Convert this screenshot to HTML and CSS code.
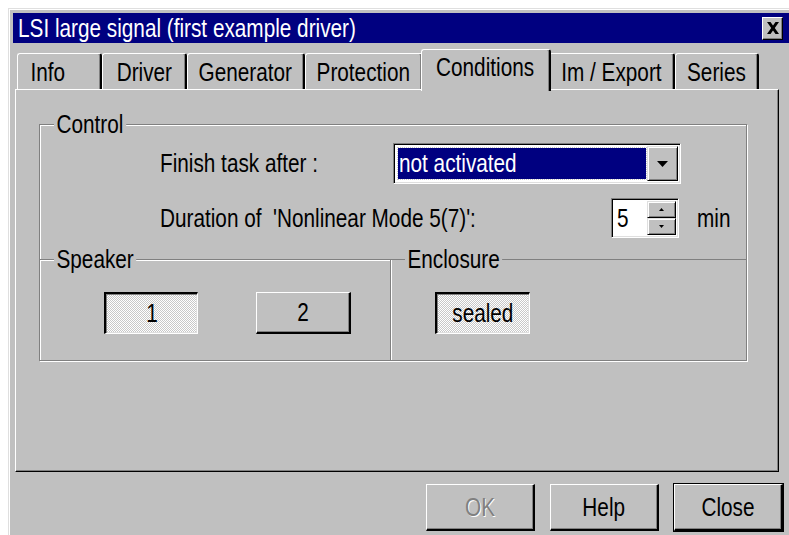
FILE: index.html
```html
<!DOCTYPE html>
<html lang="en">
<head>
<meta charset="utf-8">
<title>LSI large signal</title>
<link rel="stylesheet" href="styles.css">
</head>
<body>
<div class="window">
  <div class="titlebar">
    <span class="title"><span class="nt">LSI large signal (first example driver)</span></span>
    <span class="close-btn">
      <svg width="14" height="12" viewBox="0 0 14 12"><path d="M1 0h3.5l2.5 3.6L9.5 0H13L8.8 6 13 12H9.5L7 8.4 4.5 12H1l4.2-6z" fill="#000"/></svg>
    </span>
  </div>

  <div class="tabs">
    <div class="tab tab-info"><span class="nt">Info</span></div>
    <div class="tab tab-driver"><span class="nt">Driver</span></div>
    <div class="tab tab-generator"><span class="nt">Generator</span></div>
    <div class="tab tab-protection"><span class="nt">Protection</span></div>
    <div class="tab tab-conditions active"><span class="nt">Conditions</span></div>
    <div class="tab tab-export"><span class="nt">Im / Export</span></div>
    <div class="tab tab-series"><span class="nt">Series</span></div>
  </div>

  <div class="panel">
    <div class="group control">
      <span class="legend">Control</span>
      <div class="row row-finish">
        <span class="lbl lbl-finish"><span class="nt">Finish task after :</span></span>
        <div class="combo">
          <div class="combo-value"><span class="combo-sel"><span class="nt">not activated</span></span></div>
          <div class="combo-btn">
            <svg width="11" height="6" viewBox="0 0 11 6"><path d="M0 0h11L5.5 6z" fill="#000"/></svg>
          </div>
        </div>
      </div>
      <div class="row row-duration">
        <span class="lbl lbl-duration"><span class="nt">Duration of  'Nonlinear Mode 5(7)':</span></span>
        <div class="spin">
          <div class="spin-value"><span class="nt">5</span></div>
          <div class="spin-btns">
            <div class="spin-btn"><svg width="5" height="3" viewBox="0 0 5 3"><path d="M2.5 0L5 3H0z" fill="#000"/></svg></div>
            <div class="spin-btn"><svg width="5" height="3" viewBox="0 0 5 3"><path d="M0 0h5L2.5 3z" fill="#000"/></svg></div>
          </div>
        </div>
        <span class="unit"><span class="nt">min</span></span>
      </div>
    </div>
    <div class="groups">
      <div class="group speaker">
        <span class="legend">Speaker</span>
        <div class="btn pressed btn-one"><span class="nt">1</span></div>
        <div class="btn btn-two"><span class="nt">2</span></div>
      </div>
      <div class="group enclosure">
        <span class="legend">Enclosure</span>
        <div class="btn pressed btn-sealed"><span class="nt">sealed</span></div>
      </div>
    </div>
  </div>

  <div class="actions">
    <div class="btn action disabled"><span class="nt">OK</span></div>
    <div class="btn action"><span class="nt">Help</span></div>
    <div class="btn action default"><span class="nt">Close</span></div>
  </div>
</div>
</body>
</html>
```

FILE: styles.css
```css
html, body {
  margin: 0;
  padding: 0;
  background: #fff;
  overflow: hidden;
}

body {
  font-family: "Liberation Sans", Arial, sans-serif;
  font-size: 25px;
  color: #000;
}

/* Narrow dialog lettering: the sans face squeezed horizontally */
.nt {
  display: inline-block;
  white-space: pre;
  transform: scaleX(0.83);
  transform-origin: center;
}

.title .nt,
.lbl .nt,
.combo-sel .nt,
.spin-value .nt,
.unit .nt {
  transform-origin: left center;
}

/* Dialog frame */
.window {
  margin: 8px 0 0 8px;
  width: 776px;
  height: 540px;
  padding: 4px 0 0 4px;
  background: #c0c0c0;
  border-top: 1px solid #dfdfdf;
  border-left: 1px solid #dfdfdf;
  box-shadow: inset 1px 1px #fff;
}

.titlebar {
  height: 30px;
  background: #000080;
  color: #fff;
  display: flex;
  align-items: center;
  justify-content: space-between;
  padding: 0 6px 0 5px;
}

.title {
  flex: 1;
  line-height: 30px;
  white-space: nowrap;
}

.close-btn {
  width: 21px;
  height: 23px;
  box-sizing: border-box;
  background: #c0c0c0;
  border-top: 1px solid #fff;
  border-left: 1px solid #fff;
  border-right: 1px solid #000;
  border-bottom: 1px solid #000;
  box-shadow: inset -1px -1px #808080;
  display: flex;
  align-items: center;
  justify-content: center;
}

/* Tab strip */
.tabs {
  display: flex;
  align-items: flex-end;
  height: 40px;
  margin-top: 6px;
  padding-left: 4px;
}

.tab {
  position: relative;
  box-sizing: border-box;
  height: 36px;
  border-top: 1px solid #fff;
  border-left: 1px solid #fff;
  border-right: 2px solid #000;
  border-radius: 3px 3px 0 0;
  box-shadow: inset -1px 0 #808080;
  display: flex;
  align-items: center;
  justify-content: center;
  padding-top: 2px;
  white-space: nowrap;
}

.tab-info { width: 85px; padding-right: 22px; }
.tab-driver { width: 85px; }
.tab-generator { width: 118px; }
.tab-protection { width: 118px; }
.tab-export { width: 126px; }
.tab-series { width: 84px; }

.tab.active {
  z-index: 1;
  width: 130px;
  height: 42px;
  margin: 0 -2px -2px;
  background: #c0c0c0;
  padding-top: 0;
  padding-bottom: 6px;
}

/* Page area */
.panel {
  box-sizing: border-box;
  width: 764px;
  height: 383px;
  margin-left: 2px;
  padding: 34px 31px 0 23px;
  border-top: 1px solid #fff;
  border-left: 1px solid #fff;
  border-right: 1px solid #000;
  border-bottom: 1px solid #000;
  box-shadow: inset -1px -1px #808080;
}

/* Etched group boxes */
.group {
  position: relative;
  box-sizing: border-box;
  border: 1px solid #808080;
  box-shadow: inset 1px 1px #fff, 1px 1px #fff;
}

.legend {
  position: absolute;
  top: -14px;
  left: 14px;
  padding: 0 3px;
  line-height: 26px;
  background: #c0c0c0;
  white-space: nowrap;
  transform: scaleX(0.83);
  transform-origin: left center;
}

.control {
  height: 135px;
  border-bottom: none;
  padding: 18px 0 0 120px;
}

.row {
  display: flex;
  align-items: center;
}

.row-finish { height: 41px; }
.row-duration { height: 40px; margin-top: 14px; }

.lbl { white-space: pre; }
.lbl-finish { width: 233px; }
.lbl-duration { width: 451px; }

/* Drop-down list */
.combo {
  box-sizing: border-box;
  width: 288px;
  height: 41px;
  display: flex;
  padding: 2px;
  background: #fff;
  border: 1px solid;
  border-color: #808080 #fff #fff #808080;
  box-shadow: inset 1px 1px #000, inset -1px -1px #dfdfdf;
}

.combo-value {
  flex: 1;
  display: flex;
  padding: 2px 1px 2px 2px;
}

.combo-sel {
  flex: 1;
  background: #000080;
  color: #fff;
  outline: 1px dotted #c8c8c8;
  line-height: 31px;
  padding-left: 1px;
  white-space: nowrap;
}

.combo-btn {
  box-sizing: border-box;
  width: 31px;
  background: #c0c0c0;
  border-top: 1px solid #dfdfdf;
  border-left: 1px solid #dfdfdf;
  border-right: 1px solid #000;
  border-bottom: 1px solid #000;
  box-shadow: inset 1px 1px #fff, inset -1px -1px #808080;
  display: flex;
  align-items: center;
  justify-content: center;
}

/* Spin box */
.spin {
  box-sizing: border-box;
  width: 68px;
  height: 40px;
  display: flex;
  padding: 2px;
  background: #fff;
  border: 1px solid;
  border-color: #808080 #fff #fff #808080;
  box-shadow: inset 1px 1px #000, inset -1px -1px #dfdfdf;
}

.spin-value {
  flex: 1;
  line-height: 34px;
  padding-left: 3px;
}

.spin-btns {
  width: 29px;
  display: flex;
  flex-direction: column;
}

.spin-btn {
  flex: 1;
  box-sizing: border-box;
  background: #c0c0c0;
  border-top: 1px solid #dfdfdf;
  border-left: 1px solid #dfdfdf;
  border-right: 1px solid #000;
  border-bottom: 1px solid #000;
  box-shadow: inset 1px 1px #fff, inset -1px -1px #808080;
  display: flex;
  align-items: center;
  justify-content: center;
}

.unit { margin-left: 18px; }

/* Speaker / enclosure */
.groups {
  display: flex;
}

.speaker {
  width: 352px;
  height: 102px;
  display: flex;
  align-items: flex-start;
  padding: 32px 0 0 64px;
}

.enclosure {
  flex: 1;
  height: 102px;
  border-left: none;
  box-shadow: 1px 1px #fff;
  padding: 32px 0 0 44px;
}

/* Push buttons */
.btn {
  box-sizing: border-box;
  height: 42px;
  background: #c0c0c0;
  border-top: 1px solid #fff;
  border-left: 1px solid #fff;
  border-right: 2px solid #000;
  border-bottom: 2px solid #000;
  box-shadow: inset -1px -1px #808080;
  display: flex;
  align-items: center;
  justify-content: center;
}

.btn.pressed {
  border-width: 2px 1px 1px 2px;
  border-color: #000 #fff #fff #000;
  box-shadow: inset 1px 1px #808080, inset -1px -1px #dfdfdf;
  background: repeating-conic-gradient(#fff 0 25%, #c8c8c8 0 50%) 0 0 / 2px 2px;
}

.btn-one { width: 94px; }
.btn-two { width: 95px; margin-left: 58px; }
.btn-sealed { width: 95px; }

/* Dialog buttons */
.actions {
  display: flex;
  justify-content: flex-end;
  gap: 15px;
  margin-top: 12px;
  padding-right: 6px;
}

.btn.action {
  width: 109px;
  height: 47px;
}

.btn.disabled {
  color: #808080;
  text-shadow: 1px 1px #fff;
}

.btn.default {
  outline: 1px solid #000;
  outline-offset: 0;
}
```
